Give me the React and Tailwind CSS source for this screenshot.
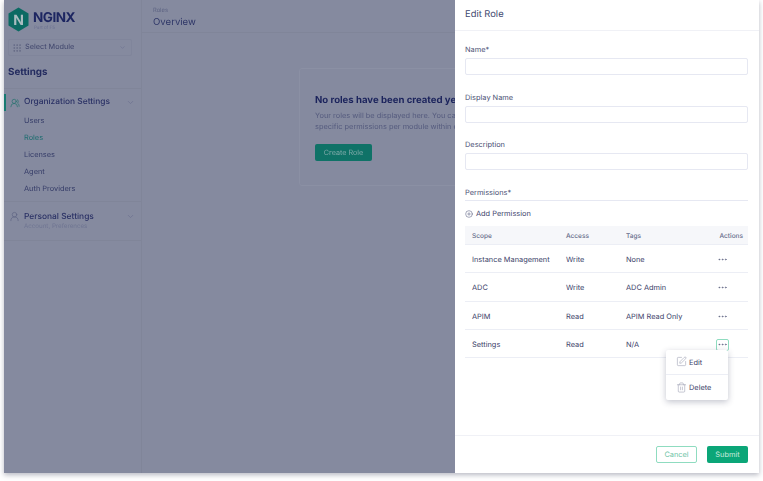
import { ChevronDown, Ellipsis, CirclePlus, SquarePen, Trash2, UsersRound, UserRound, Grip } from 'lucide-react';

const ROWS = [
  { scope: 'Instance Management', access: 'Write', tags: 'None' },
  { scope: 'ADC', access: 'Write', tags: 'ADC Admin' },
  { scope: 'APIM', access: 'Read', tags: 'APIM Read Only' },
  { scope: 'Settings', access: 'Read', tags: 'N/A', open: true },
];

const ORG_LINKS = ['Users', 'Roles', 'Licenses', 'Agent', 'Auth Providers'];

function Field({ label, className }) {
  return (
    <div className={className}>
      <div className="pt-[1px] text-[7.4px] leading-[12px] text-[#4b5175]">{label}</div>
      <div className="mt-[2px] h-[17px] rounded-[2px] border border-[#e6e8f2] bg-white" />
    </div>
  );
}

function Logo() {
  return (
    <div className="flex items-center gap-[4px] pl-[4px]">
      <svg width="21" height="25" viewBox="0 0 21 25">
        <polygon points="10.5,0.5 20.5,6.5 20.5,18.5 10.5,24.5 0.5,18.5 0.5,6.5" fill="#0b6a63" />
        <text x="10.5" y="17.5" textAnchor="middle" fontSize="14" fontWeight="700" fill="#a9bcc0">N</text>
      </svg>
      <div className="mt-[3px]">
        <div className="text-[13.5px] leading-[15px] font-bold tracking-[-0.5px] text-[#1d2661]">NGINX</div>
        <div className="pl-[1px] text-[4.5px] leading-[6px] text-[#6c7292]">Part of F5</div>
      </div>
    </div>
  );
}

function Sidebar() {
  return (
    <aside className="flex w-[138px] shrink-0 flex-col border-r border-[#808599] pt-[7px]">
      <Logo />
      <div className="mx-[4px] mt-[7px] flex h-[17px] w-[124px] items-center rounded-[2px] border border-[#80859b] pl-[3px] pr-[5px]">
        <Grip size={10} className="text-[#5e6480]" strokeWidth={1.5} />
        <span className="ml-[3px] text-[7.3px] text-[#3f456c]">Select Module</span>
        <ChevronDown size={7} className="ml-auto text-[#6d7290]" />
      </div>
      <div className="mt-[10px] pl-[4px] text-[9.8px] leading-[14px] font-bold text-[#232b5f]">Settings</div>
      <div className="mt-[8px] border-t border-[#808599]" />
      <div className="mt-[5px] flex h-[17px] items-center border-l-2 border-[#177a72] pl-[4px] pr-[6px]">
        <UsersRound size={10} className="text-[#1a6e69]" strokeWidth={1.5} />
        <span className="ml-[4px] text-[8.4px] font-medium text-[#2a3165]">Organization Settings</span>
        <ChevronDown size={9} className="ml-auto text-[#6d7290]" />
      </div>
      <ul className="mt-[2px] pl-[20px]">
        {ORG_LINKS.map((link, i) => (
          <li key={link} className={`h-[17px] text-[7.4px] leading-[15px] ${i === 1 ? 'text-[#1d6d70]' : 'text-[#353c68]'}`}>
            {link}
          </li>
        ))}
      </ul>
      <div className="mt-[3px] border-t border-[#808599]" />
      <div className="flex h-[38px] items-start pl-[5px] pr-[6px] pt-[9px]">
        <UserRound size={11} className="text-[#5f6583]" strokeWidth={1.5} />
        <div className="ml-[4px]">
          <div className="text-[8.4px] leading-[12px] font-medium text-[#2a3165]">Personal Settings</div>
          <div className="text-[6.2px] leading-[8px] text-[#6f7592]">Account, Preferences</div>
        </div>
        <ChevronDown size={9} className="ml-auto mt-[1px] text-[#6d7290]" />
      </div>
      <div className="border-t border-[#808599]" />
    </aside>
  );
}

function Main() {
  return (
    <main className="min-w-0 flex-1 overflow-hidden">
      <div className="h-[33px] border-b border-[#808599] pl-[11px] pt-[7px]">
        <div className="text-[5.8px] leading-[8px] text-[#5d6383]">Roles</div>
        <div className="mt-[1px] text-[9.6px] leading-[14px] text-[#2f3768]">Overview</div>
      </div>
      <div className="ml-[157px] mt-[35px] h-[118px] w-[400px] rounded-[3px] border border-[#8b90a4] bg-[#858a9f] pl-[15px] pt-[25px]">
        <div className="whitespace-nowrap text-[9.6px] leading-[14px] font-bold text-[#1b235c]">No roles have been created yet</div>
        <div className="mt-[2px] whitespace-nowrap text-[7.4px] leading-[11px] text-[#555b7e]">Your roles will be displayed here. You can create</div>
        <div className="whitespace-nowrap text-[7.4px] leading-[11px] text-[#555b7e]">specific permissions per module within each role.</div>
        <div className="mt-[12px] flex h-[17px] w-[57px] items-center justify-center rounded-[2px] bg-[#0f7267] pt-[1px] text-[7.2px] text-[#7fa9a9]">Create Role</div>
      </div>
    </main>
  );
}

function PermissionsTable() {
  return (
    <div className="mt-[5px] text-[7.4px] text-[#3b4269]">
      <div className="grid h-[19px] grid-cols-[101px_60px_1fr_37px] items-center border-b border-[#eceef5] bg-[#f6f7fa] pt-[4px] text-[6.5px] font-medium text-[#646a88]">
        <div className="pl-[7px]">Scope</div>
        <div>Access</div>
        <div>Tags</div>
        <div className="whitespace-nowrap pr-[5px] text-right">Actions</div>
      </div>
      {ROWS.map((row) => (
        <div key={row.scope} className="grid h-[28.33px] grid-cols-[101px_60px_1fr_37px] items-center border-b border-[#eceef5] pt-[2px]">
          <div className="whitespace-nowrap pl-[7px]">{row.scope}</div>
          <div>{row.access}</div>
          <div className="whitespace-nowrap">{row.tags}</div>
          <div className="relative">
            <div className={`ml-[5px] flex h-[12px] w-[13px] items-center justify-center rounded-[2px] ${row.open ? 'border border-[#8fdcc0]' : ''}`}>
              <Ellipsis size={11} strokeWidth={1.5} className="text-[#5a607f]" />
            </div>
            {row.open && (
              <div className="absolute right-[20px] top-[11px] z-10 w-[62px] rounded-[2px] bg-white shadow-[0_2px_6px_rgba(40,45,80,0.28)]">
                <div className="flex h-[25px] items-center gap-[2px] border-b border-[#eceef5] pl-[10px]">
                  <SquarePen size={11} className="text-[#9a9eb2]" strokeWidth={1.25} />
                  <span className="pt-[1px]">Edit</span>
                </div>
                <div className="flex h-[25px] items-center gap-[2px] pl-[10px]">
                  <Trash2 size={11} className="text-[#9a9eb2]" strokeWidth={1.25} />
                  <span>Delete</span>
                </div>
              </div>
            )}
          </div>
        </div>
      ))}
    </div>
  );
}

function Drawer() {
  return (
    <section className="flex w-[304px] shrink-0 flex-col bg-white">
      <div className="flex h-[31px] items-center border-b border-[#f0f1f6] pl-[10px] pt-[1px] text-[9.4px] text-[#41486e]">Edit Role</div>
      <div className="flex-1 pl-[10px] pr-[11px] pt-[12px]">
        <Field label="Name*" />
        <Field label="Display Name" className="mt-[16px]" />
        <Field label="Description" className="mt-[15px]" />
        <div className="mt-[17px] border-b border-[#e6e8f2] pb-[1px] text-[7.4px] leading-[12px] text-[#4b5175]">Permissions*</div>
        <div className="mt-[6px] flex h-[14px] items-center gap-[3px] text-[7.4px] text-[#3f466d]">
          <CirclePlus size={8} strokeWidth={1.5} className="text-[#4b5175]" />
          <span>Add Permission</span>
        </div>
        <PermissionsTable />
      </div>
      <div className="flex h-[38px] items-center justify-end gap-[10px] border-t border-[#f0f1f6] pr-[11px]">
        <div className="flex h-[17px] w-[41px] items-center justify-center rounded-[2px] border border-[#8fdcc0] text-[7.4px] text-[#6fc4a6]">Cancel</div>
        <div className="flex h-[17px] w-[41px] items-center justify-center rounded-[2px] bg-[#0ba678] text-[7.4px] text-[#c6eadd]">Submit</div>
      </div>
    </section>
  );
}

export default function App() {
  return (
    <div className="h-[481px] w-[763px] overflow-hidden bg-white pl-[4px] font-['Inter',sans-serif] [text-rendering:geometricPrecision]">
      <div className="flex h-[473px] w-[755px] bg-[#858a9f] shadow-[0_2px_5px_rgba(50,55,80,0.35)] blur-[0.55px]">
        <Sidebar />
        <Main />
        <Drawer />
      </div>
    </div>
  );
}
